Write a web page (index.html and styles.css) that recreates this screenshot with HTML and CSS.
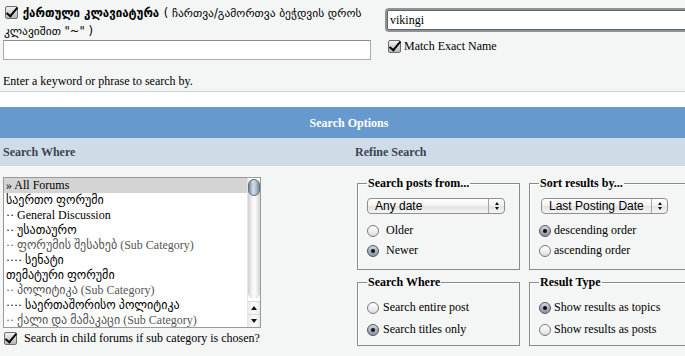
FILE: index.html
```html
<!DOCTYPE html>
<html lang="ka">
<head>
<meta charset="utf-8">
<title>Search</title>
<link rel="stylesheet" href="styles.css">
</head>
<body>
<div class="page">
  <div class="top">
    <div class="top-left">
      <label class="geo-toggle"><input type="checkbox" class="cb" checked> <b class="geo-strong">ქართული კლავიატურა</b> ( ჩართვა/გამორთვა ბეჭდვის დროს კლავიშით "~" )</label>
      <input type="text" class="field field-wide">
    </div>
    <div class="top-right">
      <input type="text" class="field field-focus" value="vikingi">
      <label class="check-row"><input type="checkbox" class="cb" checked>Match Exact Name</label>
    </div>
    <p class="hint">Enter a keyword or phrase to search by.</p>
  </div>
  <div class="gap-band"></div>
  <div class="opt-head">Search Options</div>
  <div class="sub-head">
    <div class="sub-cell">Search Where</div>
    <div class="sub-cell">Refine Search</div>
  </div>
  <div class="opt-body">
    <div class="where">
      <div class="listbox">
        <ul class="items">
          <li class="item selected">» All Forums</li>
          <li class="item">საერთო ფორუმი</li>
          <li class="item">·· General Discussion</li>
          <li class="item">·· უსათაურო</li>
          <li class="item sub">·· ფორუმის შესახებ (Sub Category)</li>
          <li class="item">···· სენატი</li>
          <li class="item">თემატური ფორუმი</li>
          <li class="item sub">·· პოლიტიკა (Sub Category)</li>
          <li class="item">···· საერთაშორისო პოლიტიკა</li>
          <li class="item sub">·· ქალი და მამაკაცი (Sub Category)</li>
        </ul>
        <div class="scroll">
          <div class="track"><div class="thumb"></div></div>
          <div class="arrow arrow-up"><span class="tri-up"></span></div>
          <div class="arrow arrow-down"><span class="tri-down"></span></div>
        </div>
      </div>
      <label class="check-row child-row"><input type="checkbox" class="cb" checked>Search in child forums if sub category is chosen?</label>
    </div>
    <div class="refine">
      <fieldset class="box box-top">
        <legend>Search posts from...</legend>
        <div class="sel-wrap sel-date">
          <select class="sel"><option>Any date</option></select>
          <span class="stepper"><span class="tri-up"></span><span class="tri-down"></span></span>
        </div>
        <label class="radio-row wide"><input type="radio" name="age" class="rd">Older</label>
        <label class="radio-row wide"><input type="radio" name="age" class="rd" checked>Newer</label>
      </fieldset>
      <fieldset class="box box-top">
        <legend>Sort results by...</legend>
        <div class="sel-wrap sel-sort">
          <select class="sel"><option>Last Posting Date</option></select>
          <span class="stepper"><span class="tri-up"></span><span class="tri-down"></span></span>
        </div>
        <label class="radio-row"><input type="radio" name="ord" class="rd" checked>descending order</label>
        <label class="radio-row"><input type="radio" name="ord" class="rd">ascending order</label>
      </fieldset>
      <fieldset class="box box-bottom">
        <legend>Search Where</legend>
        <label class="radio-row mid"><input type="radio" name="wh" class="rd">Search entire post</label>
        <label class="radio-row mid"><input type="radio" name="wh" class="rd" checked>Search titles only</label>
      </fieldset>
      <fieldset class="box box-bottom">
        <legend>Result Type</legend>
        <label class="radio-row"><input type="radio" name="rt" class="rd" checked>Show results as topics</label>
        <label class="radio-row"><input type="radio" name="rt" class="rd">Show results as posts</label>
      </fieldset>
    </div>
  </div>
</div>
</body>
</html>
```

FILE: styles.css
```css
html {
  background: #f4f5f5;
  overflow: hidden;
}
body {
  margin: 0;
  font: 12px "Liberation Serif", "DejaVu Sans", serif;
  color: #000;
}
.page {
  width: 698px;
}

/* top search area */
.top {
  display: grid;
  grid-template-columns: 380px 1fr;
  padding: 4px 0 2px 3px;
  border-bottom: 1px solid #c6d4e2;
}
.top-left {
  display: flex;
  flex-direction: column;
}
.geo-toggle {
  font: 11.5px/18px "DejaVu Sans", sans-serif;
  padding-left: 1px;
}
.geo-strong {
  font-weight: bold;
  margin-right: 1px;
}
.field {
  box-sizing: border-box;
  height: 20px;
  border: 1px solid #a9a9a9;
  border-top-color: #8d8d8d;
  background: #fff;
  font: 12px "Liberation Serif", serif;
  padding: 0 2px;
  margin: 0;
}
.field-wide {
  width: 368px;
}
.top-right {
  display: flex;
  flex-direction: column;
  padding-left: 4px;
  padding-top: 6px;
}
.field-focus {
  width: 320px;
  border: 1px solid #5f6368;
  border-radius: 2px;
  box-shadow: 0 0 0 2px #8e9399;
  outline: none;
}
.check-row {
  display: flex;
  align-items: center;
  gap: 2px;
  line-height: 15px;
}
.top-right .check-row {
  margin-top: 9px;
}
.hint {
  grid-column: 1 / 3;
  margin: 14px 0 0;
  line-height: 15px;
}

/* checkbox */
.cb {
  appearance: none;
  -webkit-appearance: none;
  position: relative;
  width: 13px;
  height: 13px;
  margin: 0 1px 0 1px;
  border: 1px solid #6e6e6e;
  border-radius: 2px;
  background: linear-gradient(#f2f2f2, #cfcfcf 55%, #b8b8b8);
  vertical-align: -2px;
  flex: none;
}
.cb:checked::after {
  content: "";
  position: absolute;
  left: 3px;
  top: -2px;
  width: 4px;
  height: 10px;
  border-right: 2.5px solid #000;
  border-bottom: 2.5px solid #000;
  transform: rotate(40deg);
}

/* band + headers */
.gap-band {
  height: 15px;
  background: #fff;
}
.opt-head {
  height: 31px;
  line-height: 32px;
  background: #6699cc;
  color: #fff;
  font-weight: bold;
  text-align: center;
}
.sub-head {
  display: grid;
  grid-template-columns: 352px 1fr;
  height: 28px;
  line-height: 29px;
  background: #d0dbe8;
  color: #3a4452;
  font-weight: bold;
}
.sub-cell {
  padding-left: 3px;
}

/* body */
.opt-body {
  display: grid;
  grid-template-columns: 352px 1fr;
  padding-top: 10px;
}
.where {
  padding-left: 3px;
  padding-top: 1px;
}
.listbox {
  display: flex;
  width: 258px;
  height: 151px;
  box-sizing: border-box;
  border: 1px solid #9a9a9a;
  background: #fff;
}
.items {
  flex: 1;
  list-style: none;
  margin: 0;
  padding: 0;
  overflow: hidden;
}
.item {
  height: 15px;
  line-height: 15px;
  padding-left: 2px;
  white-space: nowrap;
  font-family: "Liberation Serif", "DejaVu Sans", serif;
}
.item.selected {
  background: #d4d4d4;
}
.item.sub {
  color: #555;
}
.scroll {
  width: 12px;
  display: flex;
  flex-direction: column;
  border-left: 1px solid #e4e4e4;
  background: #fff;
}
.track {
  flex: 1;
  margin: 1px 0 2px;
  border-radius: 6px;
  background: linear-gradient(90deg, #cfcfcf, #f8f8f8 40%, #fbfbfb 60%, #d2d2d2);
}
.thumb {
  height: 17px;
  border-radius: 6px;
  border: 1px solid #5c6b7d;
  box-sizing: border-box;
  background: linear-gradient(90deg, #7a899b, #d3dce6 40%, #c2cdd9 60%, #7e8d9f);
}
.arrow {
  height: 12px;
  display: flex;
  align-items: center;
  justify-content: center;
  border-top: 1px solid #d8d8d8;
  background: linear-gradient(90deg, #e9e9e9, #fff 50%, #e9e9e9);
}
.tri-up {
  width: 0;
  height: 0;
  border-left: 3px solid transparent;
  border-right: 3px solid transparent;
  border-bottom: 4px solid #111;
}
.tri-down {
  width: 0;
  height: 0;
  border-left: 3px solid transparent;
  border-right: 3px solid transparent;
  border-top: 4px solid #111;
}
.child-row {
  margin-top: 3px;
  gap: 6px;
}

/* refine area */
.refine {
  display: grid;
  grid-template-columns: 163px 175px;
  column-gap: 9px;
  row-gap: 5px;
  padding-left: 5px;
  align-content: start;
}
.box {
  margin: 0;
  min-width: 0;
  border: 1px solid #8a8a8a;
  box-shadow: inset 1px 1px 0 #fff;
  padding: 0 9px;
}
.box legend {
  font-weight: bold;
  padding: 0 1px;
  line-height: 15px;
}
.box-top {
  padding-top: 7px;
  padding-bottom: 9px;
}
.box-bottom {
  padding-top: 6px;
  padding-bottom: 5px;
}
.sel-wrap {
  position: relative;
  height: 16px;
  margin-bottom: 6px;
}
.sel-date {
  width: 138px;
}
.sel-sort {
  width: 127px;
  margin-left: 2px;
}
.sel {
  appearance: none;
  -webkit-appearance: none;
  display: block;
  width: 100%;
  height: 16px;
  box-sizing: border-box;
  margin: 0;
  padding: 0 0 0 7px;
  border: 1px solid #8f8f8f;
  border-radius: 4px;
  background: linear-gradient(#ffffff, #f3f3f3 45%, #e3e3e3 55%, #f5f5f5);
  font: 12px/14px "Liberation Sans", sans-serif;
  color: #000;
}
.stepper {
  position: absolute;
  right: 1px;
  top: 1px;
  width: 15px;
  height: 14px;
  border-left: 1px solid #a5a5a5;
  display: flex;
  flex-direction: column;
  align-items: center;
  justify-content: center;
  gap: 2px;
}
.stepper .tri-up,
.stepper .tri-down {
  border-left-width: 2.5px;
  border-right-width: 2.5px;
  border-bottom-width: 3px;
  border-top-width: 3px;
}
.stepper .tri-up { border-top-width: 0; }
.stepper .tri-down { border-bottom-width: 0; }
.radio-row {
  display: flex;
  align-items: center;
  gap: 3px;
  height: 20px;
}
.radio-row.wide {
  gap: 7px;
}
.radio-row.mid {
  gap: 4px;
}
.box-bottom .radio-row {
  height: 22px;
}
.rd {
  appearance: none;
  -webkit-appearance: none;
  position: relative;
  width: 12px;
  height: 12px;
  margin: 2px 0 0 0;
  border: 1px solid #7a7a7a;
  border-radius: 50%;
  background: linear-gradient(#ffffff, #f0f0f0 50%, #d9d9d9);
  flex: none;
  box-sizing: border-box;
}
.rd:checked {
  border-color: #4e5661;
  background: linear-gradient(#d4d9e0, #a7afba 50%, #8e97a4);
}
.rd:checked::after {
  content: "";
  position: absolute;
  left: 3px;
  top: 3px;
  width: 4px;
  height: 4px;
  border-radius: 50%;
  background: #111;
}
```
